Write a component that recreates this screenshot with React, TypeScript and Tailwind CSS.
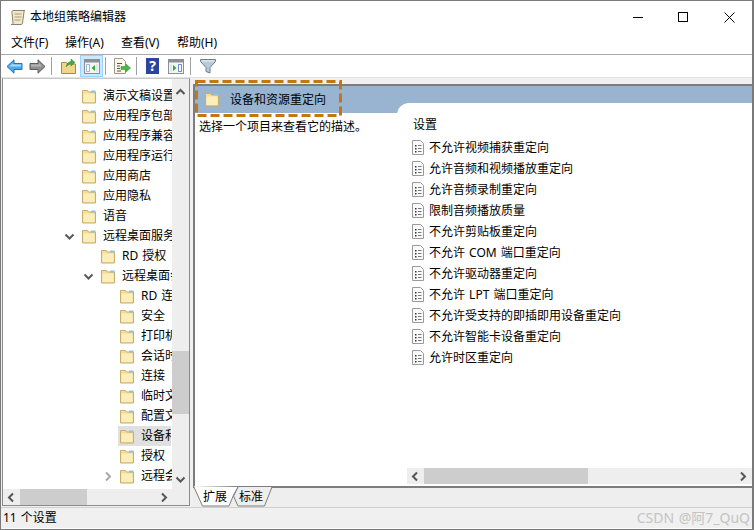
import React from "react";

const treeRows = [
  { label: "演示文稿设置", level: 0 },
  { label: "应用程序包部署", level: 0 },
  { label: "应用程序兼容性", level: 0 },
  { label: "应用程序运行时", level: 0 },
  { label: "应用商店", level: 0 },
  { label: "应用隐私", level: 0 },
  { label: "语音", level: 0 },
  { label: "远程桌面服务", level: 0, arrow: "open" },
  { label: "RD 授权", level: 1 },
  { label: "远程桌面会话主机", level: 1, arrow: "open" },
  { label: "RD 连接代理", level: 2 },
  { label: "安全", level: 2 },
  { label: "打印机重定向", level: 2 },
  { label: "会话时间限制", level: 2 },
  { label: "连接", level: 2 },
  { label: "临时文件夹", level: 2 },
  { label: "配置文件", level: 2 },
  { label: "设备和资源重定向", level: 2, selected: true },
  { label: "授权", level: 2 },
  { label: "远程会话环境", level: 2, arrow: "closed" },
];

const settings = [
  "不允许视频捕获重定向",
  "允许音频和视频播放重定向",
  "允许音频录制重定向",
  "限制音频播放质量",
  "不允许剪贴板重定向",
  "不允许 COM 端口重定向",
  "不允许驱动器重定向",
  "不允许 LPT 端口重定向",
  "不允许受支持的即插即用设备重定向",
  "不允许智能卡设备重定向",
  "允许时区重定向",
];

function Folder() {
  return (
    <svg width="16" height="15" viewBox="0 0 16 15" className="block shrink-0">
      <path d="M1.500 3V1.500h5l1 1.500h7v11h-13z" fill="#f6dc94" stroke="#c9ad6c" />
      <path d="M2.500 4.500h11v8.500h-11z" fill="#fbeebb" />
      <path d="M10 1.500h4.500v2H10z" fill="#8fc0e8" />
    </svg>
  );
}

function DocIcon() {
  return (
    <svg width="12" height="15" viewBox="0 0 12 15" className="shrink-0">
      <path d="M.5.500h8l3 3v11H.5z" fill="#fafafa" stroke="#9a9a9a" />
      <path d="M3 5h1.500v1.500H3zM3 8h1.500v1.500H3zM3 11h1.500v1.500H3z" fill="#333" />
      <path d="M6 5.500h3.500M6 8.500h3.500M6 11.500h3.500" stroke="#777" />
    </svg>
  );
}

function Chevron({ dir, color = "#555" }: { dir: "up" | "down" | "left" | "right"; color?: string }) {
  const d = {
    up: "M1.500 7 L5.500 3 L9.500 7",
    down: "M1.500 3.500 L5.500 7.500 L9.500 3.500",
    left: "M7 1.500 L3 5.500 L7 9.500",
    right: "M4 1.500 L8 5.500 L4 9.500",
  }[dir];
  return (
    <svg width="11" height="11" viewBox="0 0 11 11" className="block shrink-0">
      <path d={d} fill="none" stroke={color} strokeWidth="2" />
    </svg>
  );
}

function ToolSep({ ml }: { ml: string }) {
  return <div className={`h-[18px] w-px shrink-0 bg-[#a0a0a0] ${ml}`} />;
}

function PanelIcon({ side }: { side: "left" | "right" }) {
  return (
    <svg width="16" height="15" viewBox="0 0 16 15" className="block shrink-0">
      <rect x=".5" y=".5" width="15" height="14" fill="#f4f4f4" stroke="#8a8f96" />
      <rect x="1" y="1" width="14" height="2.500" fill="#8a9099" />
      {side === "left" ? (
        <>
          <path d="M2.500 5.500h3v7h-3z" fill="#fff" stroke="#9fb6cf" />
          <path d="M11 6v6L7.500 9z" fill="#35a93f" />
          <path d="M12 5h2v8h-2z" fill="#dfe6ee" />
        </>
      ) : (
        <>
          <path d="M5 6v6l3.500-3z" fill="#35a93f" />
          <path d="M2 5h2v8H2z" fill="#dfe6ee" />
          <path d="M10.500 5.500h3v7h-3z" fill="#fff" stroke="#5f8fd0" />
        </>
      )}
    </svg>
  );
}

function Toolbar() {
  return (
    <div className="box-content flex h-[22px] items-center border-b border-[#e3e3e3]">
      <svg width="17" height="15" viewBox="0 0 17 15" className="ml-[5px] shrink-0">
        <path d="M8 .8 1 7.500 8 14.200V10.500h8v-6H8z" fill="#4ca9ea" stroke="#1f74b8" />
        <path d="M7 4.500 3 7.500h12V5.500H7z" fill="#a9dcfb" />
      </svg>
      <svg width="17" height="15" viewBox="0 0 17 15" className="ml-[6px] shrink-0">
        <path d="M9 .8 16 7.500 9 14.200V10.500H1v-6h8z" fill="#8e8e8e" stroke="#5c5c5c" />
        <path d="M2 5.500h8V3.500l3 4H2z" fill="#b5b5b5" />
      </svg>
      <ToolSep ml="ml-[5px]" />
      <svg width="15" height="16" viewBox="0 0 15 16" className="ml-[9px] shrink-0">
        <path d="M.5 4.500h5l1 1.500h8v9.500H.5z" fill="#f3d58a" stroke="#a88a45" />
        <path d="M5 9C5.500 5.500 7.500 4 10 3.500V1l4 3.500L10 8V5.800C8 6.200 6.500 7.500 5 9z" fill="#3fae3f" stroke="#2b8a2f" strokeWidth=".5" />
      </svg>
      <div className="ml-[4px] flex h-[22px] w-[23px] shrink-0 items-center justify-center border border-[#99d1ff] bg-[#cce8ff]">
        <PanelIcon side="left" />
      </div>
      <ToolSep ml="ml-[2px]" />
      <svg width="17" height="16" viewBox="0 0 17 16" className="ml-[8px] shrink-0">
        <path d="M.5.500h8l3 3v12H.5z" fill="#faf7e8" stroke="#9a9a8a" />
        <path d="M3 5.500h5M3 8h3M3 10.500h3M3 13h4" stroke="#555" />
        <path d="M7 8.500h5V6l4.500 4-4.500 4v-2.500H7z" fill="#49b649" stroke="#2f8f33" strokeWidth=".5" />
      </svg>
      <ToolSep ml="ml-[5px]" />
      <div className="ml-[9px] flex h-[16px] w-[13px] shrink-0 items-center justify-center bg-[#2a44a0] text-[14px] leading-none font-bold text-white">
        ?
      </div>
      <div className="ml-[9px] flex shrink-0">
        <PanelIcon side="right" />
      </div>
      <ToolSep ml="ml-[6px]" />
      <svg width="16" height="16" viewBox="0 0 16 16" className="ml-[9px] shrink-0">
        <path d="M.5 1.500h15v2L10 9.500v5.500l-4-1.500v-4L.5 3.500z" fill="#b9c9d6" stroke="#6b7f90" />
        <path d="M2 2.500h12v1H2z" fill="#eef3f7" />
      </svg>
    </div>
  );
}

function TreePane() {
  return (
    <div className="flex h-[428px] w-[188px] border border-[#8a8a8a] border-t-[#c8c8c8]">
      <div className="flex w-[169px] flex-col">
        <div className="h-[410px] overflow-hidden bg-white pt-[7px]">
          {treeRows.map((row) => (
            <div
              key={row.label}
              className={`flex h-5 items-center ${
                row.level === 0 ? "pl-[78px]" : row.level === 1 ? "pl-[97px]" : "pl-[116px]"
              }`}
            >
              <div className={`flex h-5 w-full items-center whitespace-nowrap ${row.selected ? "-ml-px bg-[#e0e0e0] pl-px" : ""}`}>
                <span className="relative shrink-0">
                  {row.arrow && (
                    <span className="absolute top-[2px] -left-[17px]">
                      <Chevron dir={row.arrow === "open" ? "down" : "right"} color={row.arrow === "open" ? "#595959" : "#a8a8a8"} />
                    </span>
                  )}
                  <Folder />
                </span>
                <span className="ml-[6px] min-w-0 overflow-hidden">{row.label}</span>
              </div>
            </div>
          ))}
        </div>
        <div className="flex h-[16px] items-center bg-[#eeeeee]">
          <span className="ml-[3px]">
            <Chevron dir="left" />
          </span>
          <div className="ml-[3px] h-[16px] w-[67px] bg-[#cdcdcd]" />
          <span className="ml-[71px]">
            <Chevron dir="right" />
          </span>
        </div>
      </div>
      <div className="flex w-[17px] flex-col items-center bg-[#eeeeee] pt-[8px]">
        <Chevron dir="up" />
        <div className="mt-[253px] h-[63px] w-full bg-[#cdcdcd]" />
        <div className="mt-[60px]">
          <Chevron dir="down" />
        </div>
      </div>
    </div>
  );
}

function DetailPane() {
  return (
    <div className="relative ml-[3px] flex h-[429px] w-[559px] flex-col">
      {/* orange annotation around the header */}
      <svg width="147" height="37" viewBox="0 0 147 37" className="absolute top-[2px] left-[2px] z-20">
        <rect x="1.500" y="1.500" width="144" height="34" fill="none" stroke="#c4760f" strokeWidth="3" strokeDasharray="9 4" />
      </svg>
      <div className="h-[6px] bg-[#f0f0f0]" />
      <div className="flex h-[402px] flex-col border-t-2 border-l-2 border-[#7d7d7d]">
        <div className="flex h-[382px]">
          <div className="w-[202px] bg-white">
            <div className="flex h-[27px] items-center bg-[#99b4d1] pl-[9px]">
              <Folder />
              <span className="ml-[10px]">设备和资源重定向</span>
            </div>
            <div className="pt-[6px] pl-[4px] leading-[16px]">选择一个项目来查看它的描述。</div>
          </div>
          <div className="flex-1 bg-[#99b4d1] pt-[17px]">
            <div className="h-[365px] rounded-tl-[12px] bg-white pt-[14px] pl-[15px]">
              <div className="h-[16px] pl-px leading-[16px]">设置</div>
              <div className="mt-[4px]">
                {settings.map((s) => (
                  <div key={s} className="flex h-[21px] items-center">
                    <DocIcon />
                    <span className="ml-[5px]">{s}</span>
                  </div>
                ))}
              </div>
            </div>
          </div>
        </div>
        <div className="flex h-[18px] bg-white">
          <div className="ml-[212px] flex h-[16px] w-[345px] items-center bg-[#eeeeee]">
            <span className="ml-[3px]">
              <Chevron dir="left" />
            </span>
            <div className="ml-[3px] h-[16px] w-[164px] bg-[#cdcdcd]" />
            <span className="ml-[149px]">
              <Chevron dir="right" />
            </span>
          </div>
        </div>
      </div>
      <div className="relative flex h-[21px] border-t-2 border-[#7d7d7d] bg-[#eeeeee]">
        <svg width="82" height="21" viewBox="0 0 82 21" className="absolute -top-[2px] left-0">
          <path d="M45 1 40.500 10 45 20H71.500L79 1" fill="#eeeeee" stroke="#7d7d7d" />
          <path d="M0.500 0 9.500 20H36L41 8 45 1" fill="#fff" stroke="#7d7d7d" />
        </svg>
        <span className="relative ml-[10px] w-[24px] leading-[18px]">扩展</span>
        <span className="relative ml-[12px] leading-[18px]">标准</span>
      </div>
    </div>
  );
}

export default function App() {
  return (
    <div
      className="relative flex h-[530px] w-[754px] flex-col overflow-hidden border-t border-r-2 border-b border-l border-[#7a7a7a] bg-white text-[12px] text-black [word-spacing:1px]"
      style={{ fontFamily: '"Noto Sans", "Noto Sans CJK SC", sans-serif' }}
    >
      {/* title bar */}
      <div className="flex h-[32px] items-center">
        <svg width="17" height="17" viewBox="0 0 17 17" className="ml-[8px]">
          <path d="M4 2C3 2 2.500 3 3 4l1 10c0 1-1 1.500-2 1.500h10c1 0 1.500-.7 1.500-1.500L15 3c0-1 .5-1.500 1-1.500H4z" fill="#f2e8c6" stroke="#8a8270" />
          <path d="M5.500 5h7M5.500 8h7M5.500 11h6" stroke="#a89e80" />
        </svg>
        <span className="ml-[4px]">本地组策略编辑器</span>
        <svg width="11" height="11" viewBox="0 0 11 11" className="ml-auto">
          <path d="M0 5.500h10" stroke="#000" />
        </svg>
        <svg width="11" height="11" viewBox="0 0 11 11" className="ml-[34px]">
          <rect x=".5" y=".5" width="9" height="9" fill="none" stroke="#000" />
        </svg>
        <svg width="11" height="11" viewBox="0 0 11 11" className="mr-[17px] ml-[35px]">
          <path d="M.5.500l10 10M10.500.500l-10 10" stroke="#000" />
        </svg>
      </div>
      {/* menu */}
      <div className="flex h-[22px] items-center gap-[16px] border-b border-[#a9a9a9] pb-[1px] pl-[10px]">
        <span className="w-[38px] whitespace-nowrap">文件(F)</span>
        <span className="w-[40px] whitespace-nowrap">操作(A)</span>
        <span className="w-[40px] whitespace-nowrap">查看(V)</span>
        <span className="whitespace-nowrap">帮助(H)</span>
      </div>
      <Toolbar />
      {/* panes */}
      <div className="flex h-[429px] bg-[#f0f0f0] pl-[1px]">
        <TreePane />
        <DetailPane />
      </div>
      {/* status bar */}
      <div className="flex h-[21px] items-center border-t border-[#d0d0d0] bg-[#f0f0f0] pl-[2px]">
        11 个设置
      </div>
      <div className="absolute right-[2px] bottom-[1px] text-[14px] text-[#c4c4c4]">CSDN @阿7_QuQ</div>
    </div>
  );
}
